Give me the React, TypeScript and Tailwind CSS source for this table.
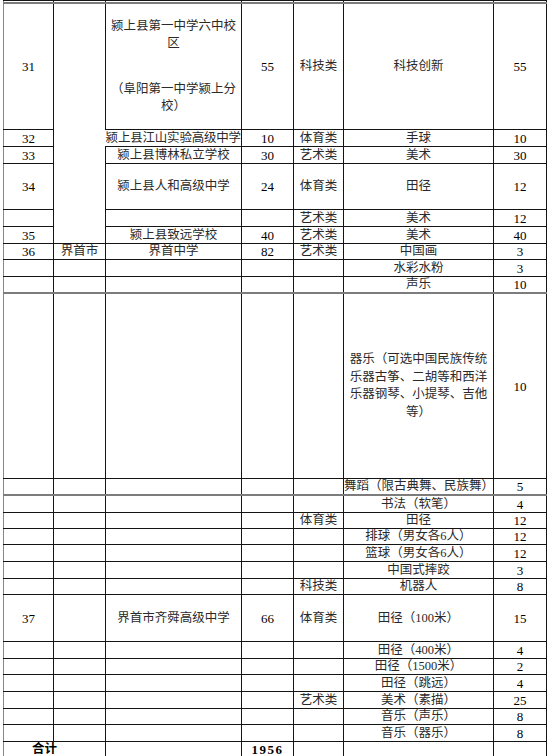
import clsx from "clsx";
import type { ReactNode } from "react";

type CellProps = {
  children?: ReactNode;
  className?: string;
  rowSpan?: number;
  colSpan?: number;
};

function C({ children, className, ...rest }: CellProps) {
  return (
    <td
      className={clsx(
        "border border-[#141414] p-0 pt-[1px] text-center align-middle leading-[13px] whitespace-nowrap overflow-visible",
        className
      )}
      {...rest}
    >
      {children}
    </td>
  );
}

// rows under 界首中学: [height, category, item, count, heavy top line]
const jieshou: [string, string, ReactNode, string, boolean?][] = [
  ["h-[17px]", "", "水彩水粉", "3"],
  ["h-[17px]", "", "声乐", "10"],
  [
    "h-[185px]",
    "",
    <div className="leading-[17.5px]">
      器乐（可选中国民族传统
      <br />
      乐器古筝、二胡等和西洋
      <br />
      乐器钢琴、小提琴、吉他
      <br />
      等）
    </div>,
    "10",
    true,
  ],
  ["h-[17px]", "", "舞蹈（限古典舞、民族舞）", "5"],
  ["h-[17px]", "", "书法（软笔）", "4", true],
  ["h-[16px]", "体育类", "田径", "12"],
  ["h-[16px]", "", "排球（男女各6人）", "12"],
  ["h-[17px]", "", "篮球（男女各6人）", "12"],
  ["h-[17px]", "", "中国式摔跤", "3"],
  ["h-[16px]", "科技类", "机器人", "8"],
];

const qishun: [string, string, string, string][] = [
  ["h-[17px]", "", "田径（400米）", "4"],
  ["h-[16px]", "", "田径（1500米）", "2"],
  ["h-[17px]", "", "田径（跳远）", "4"],
  ["h-[17px]", "艺术类", "美术（素描）", "25"],
  ["h-[16px]", "", "音乐（声乐）", "8"],
  ["h-[17px]", "", "音乐（器乐）", "8"],
];

export default function App() {
  return (
    <div className="w-[547px] h-[756px] overflow-hidden bg-white text-[#2a2a2a] text-[12.5px] font-['Liberation_Serif','Noto_Sans_CJK_SC',serif]">
      <table className="ml-[3px] w-[543px] table-fixed border-collapse">
        <colgroup>
          <col className="w-[50px]" />
          <col className="w-[52px]" />
          <col className="w-[136px]" />
          <col className="w-[52px]" />
          <col className="w-[50px]" />
          <col className="w-[150px]" />
          <col className="w-[53px]" />
        </colgroup>
        <tbody>
          {/* tail of the previous page row */}
          <tr className="h-[1px]">
            <C className="border-l-[#888] pt-0" />
            <C className="pt-0" />
            <C className="pt-0" />
            <C className="pt-0" />
            <C className="pt-0" />
            <C className="pt-0" />
            <C className="pt-0" />
          </tr>

          <tr className="h-[126px] border-t-2 border-t-[#7c7c7c]">
            <C className="border-l-[#888] text-[13px] text-black">31</C>
            <C rowSpan={6} className="border-r-0" />
            <C>
              <div className="leading-[17px]">
                颍上县第一中学六中校
                <br />
                区
              </div>
              <div className="mt-[29px] leading-[17px]">
                （阜阳第一中学颍上分
                <br />
                校）
              </div>
            </C>
            <C className="text-[13px] text-black">55</C>
            <C>科技类</C>
            <C>科技创新</C>
            <C className="text-[13px] text-black">55</C>
          </tr>
          <tr className="h-[17px]">
            <C className="border-l-[#888] text-[13px] text-black">32</C>
            <C className="border-l-0 tracking-[-0.2px]">颍上县江山实验高级中学</C>
            <C className="text-[13px] text-black">10</C>
            <C>体育类</C>
            <C>手球</C>
            <C className="text-[13px] text-black">10</C>
          </tr>
          <tr className="h-[17px]">
            <C className="border-l-[#888] text-[13px] text-black">33</C>
            <C>颍上县博林私立学校</C>
            <C className="text-[13px] text-black">30</C>
            <C>艺术类</C>
            <C>美术</C>
            <C className="text-[13px] text-black">30</C>
          </tr>
          <tr className="h-[46px]">
            <C className="border-l-[#888] text-[13px] text-black">34</C>
            <C>颍上县人和高级中学</C>
            <C className="text-[13px] text-black">24</C>
            <C>体育类</C>
            <C>田径</C>
            <C className="text-[13px] text-black">12</C>
          </tr>
          <tr className="h-[17px]">
            <C className="border-l-[#888]" />
            <C />
            <C />
            <C>艺术类</C>
            <C>美术</C>
            <C className="text-[13px] text-black">12</C>
          </tr>
          <tr className="h-[17px]">
            <C className="border-l-[#888] text-[13px] text-black">35</C>
            <C>颍上县致远学校</C>
            <C className="text-[13px] text-black">40</C>
            <C>艺术类</C>
            <C>美术</C>
            <C className="text-[13px] text-black">40</C>
          </tr>
          <tr className="h-[16px]">
            <C className="border-l-[#888] text-[13px] text-black">36</C>
            <C>界首市</C>
            <C>界首中学</C>
            <C className="text-[13px] text-black">82</C>
            <C>艺术类</C>
            <C>中国画</C>
            <C className="text-[13px] text-black">3</C>
          </tr>

          {jieshou.map(([h, cat, item, n, heavy], i) => (
            <tr key={`j${i}`} className={clsx(h, heavy && "border-t-2 border-t-[#7c7c7c]")}>
              <C className="border-l-[#888]" />
              <C />
              <C />
              <C />
              <C>{cat}</C>
              <C>{item}</C>
              <C className="text-[13px] text-black">{n}</C>
            </tr>
          ))}

          <tr className="h-[47px]">
            <C className="border-l-[#888] text-[13px] text-black">37</C>
            <C />
            <C>界首市齐舜高级中学</C>
            <C className="text-[13px] text-black">66</C>
            <C>体育类</C>
            <C>田径（100米）</C>
            <C className="text-[13px] text-black">15</C>
          </tr>
          {qishun.map(([h, cat, item, n], i) => (
            <tr key={`q${i}`} className={h}>
              <C className="border-l-[#888]" />
              <C />
              <C />
              <C />
              <C>{cat}</C>
              <C>{item}</C>
              <C className="text-[13px] text-black">{n}</C>
            </tr>
          ))}

          <tr className="h-[15px]">
            <C colSpan={2} className="border-l-[#888] border-b-0 pt-0 pr-[20px] font-bold text-black">
              合计
            </C>
            <C className="border-b-0" />
            <C className="border-b-0 pt-0 text-[13px] font-bold tracking-[1.5px] text-black">1956</C>
            <C className="border-b-0" />
            <C className="border-b-0" />
            <C className="border-b-0" />
          </tr>
        </tbody>
      </table>
    </div>
  );
}
